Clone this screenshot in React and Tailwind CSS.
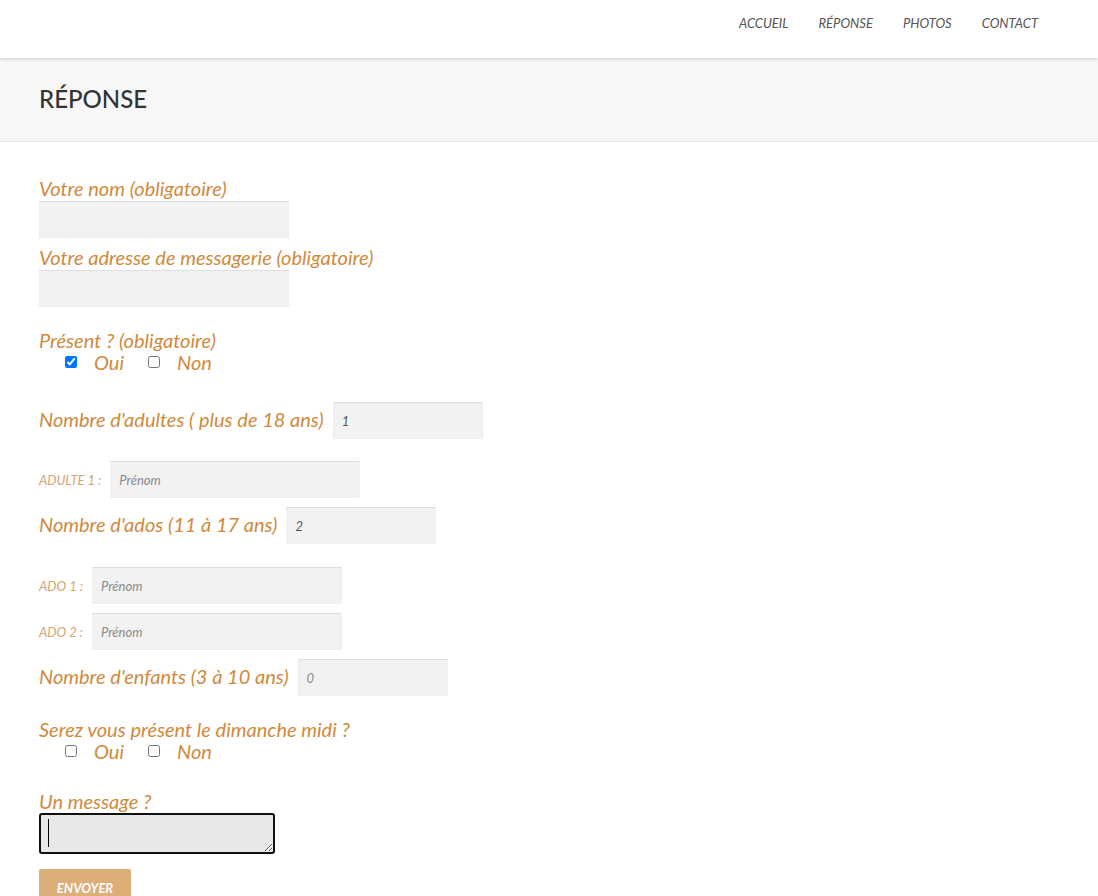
import React from "react";

const labelClass = "text-[20px] leading-[22px] text-[#d08a3c]";
const fieldClass =
  "h-[37px] border border-[#efefef] border-t-[#dddddd] bg-[#f2f2f2] px-2 text-[13px] italic text-[#555555] placeholder:text-[#8a8a8a] focus:outline-none";

const links = ["Accueil", "Réponse", "Photos", "Contact"];

function StackedField({ id, label, type }) {
  return (
    <div className="flex flex-col items-start gap-[2px]">
      <label htmlFor={id} className={labelClass}>{label}</label>
      <input id={id} type={type} required className={`${fieldClass} w-[250px] max-w-full`} />
    </div>
  );
}

function CountField({ id, label, value, placeholder }) {
  return (
    <div className="flex flex-wrap items-center gap-x-[9px]">
      <label htmlFor={id} className={`${labelClass} pb-1`}>{label}</label>
      <input
        id={id}
        type="text"
        inputMode="numeric"
        defaultValue={value}
        placeholder={placeholder}
        className={`${fieldClass} w-[150px]`}
      />
    </div>
  );
}

function NameField({ id, label }) {
  return (
    <div className="flex flex-wrap items-center gap-x-[9px]">
      <label htmlFor={id} className="text-[13px] leading-4 text-[#d9a273] uppercase">{label}</label>
      <input id={id} type="text" placeholder="Prénom" className={`${fieldClass} w-[250px]`} />
    </div>
  );
}

function YesNo({ name, legend, yes }) {
  return (
    <fieldset>
      <legend className={labelClass}>{legend}</legend>
      <div className="flex items-center gap-6 pl-[26px]">
        <label className={`${labelClass} flex items-center gap-[17px]`}>
          <input type="checkbox" name={name} value="oui" defaultChecked={yes} className="size-3" />
          Oui
        </label>
        <label className={`${labelClass} flex items-center gap-[17px]`}>
          <input type="checkbox" name={name} value="non" className="size-3" />
          Non
        </label>
      </div>
    </fieldset>
  );
}

export default function App() {
  return (
    <div className="min-h-screen bg-white font-['Lato',sans-serif] italic">
      <header className="relative flex h-[58px] justify-end bg-white px-[60px] pt-3 shadow-[0_1px_4px_rgba(0,0,0,0.18)]">
        <nav className="flex items-start gap-[30px] text-[13px] leading-[22px] text-[#555555] uppercase">
          {links.map((link) => (
            <a key={link} href={`#${link.toLowerCase()}`}>{link}</a>
          ))}
        </nav>
      </header>

      <div className="flex h-[84px] items-center border-b border-[#e6e6e6] bg-[#f7f7f7] px-[39px] pb-[2px]">
        <h1 className="text-[24px] leading-8 font-medium text-[#333333] uppercase not-italic">
          Réponse
        </h1>
      </div>

      <main className="px-[39px] pt-[35px] pb-4">
        <form>
          <div className="flex flex-col gap-2">
            <StackedField id="nom" label="Votre nom (obligatoire)" type="text" />
            <StackedField id="email" label="Votre adresse de messagerie (obligatoire)" type="email" />
          </div>

          <div className="mt-[22px]">
            <YesNo name="present" legend="Présent ? (obligatoire)" yes />
          </div>

          <div className="mt-[29px]">
            <CountField id="adultes" label="Nombre d'adultes ( plus de 18 ans)" value="1" />
          </div>
          <div className="mt-[22px] flex flex-col gap-[9px]">
            <NameField id="adulte-1" label="Adulte 1 :" />
            <CountField id="ados" label="Nombre d'ados (11 à 17 ans)" value="2" />
          </div>
          <div className="mt-[23px] flex flex-col gap-[9px]">
            <NameField id="ado-1" label="Ado 1 :" />
            <NameField id="ado-2" label="Ado 2 :" />
            <CountField id="enfants" label="Nombre d'enfants (3 à 10 ans)" placeholder="0" />
          </div>

          <div className="mt-[22px]">
            <YesNo name="dimanche" legend="Serez vous présent le dimanche midi ?" />
          </div>

          <div className="mt-7 flex flex-col items-start gap-px">
            <label htmlFor="message" className={labelClass}>Un message ?</label>
            <div className="relative flex max-w-full">
              <textarea
                id="message"
                autoFocus
                rows={1}
                className="peer h-[41px] w-[236px] max-w-full rounded-[3px] border-2 border-[#101010] bg-[#e8e8e8] px-2 py-1 text-[13px] leading-7 text-[#333333] caret-transparent outline-none"
              />
              <span
                aria-hidden="true"
                className="pointer-events-none absolute top-[6px] left-[9px] hidden h-7 w-px bg-black peer-focus:block"
              />
            </div>
          </div>

          <button
            type="submit"
            className="mt-[15px] h-[37px] w-[92px] rounded-[2px] bg-[#dcae78] text-[13px] leading-5 font-bold text-white uppercase italic"
          >
            Envoyer
          </button>
        </form>
      </main>
    </div>
  );
}
